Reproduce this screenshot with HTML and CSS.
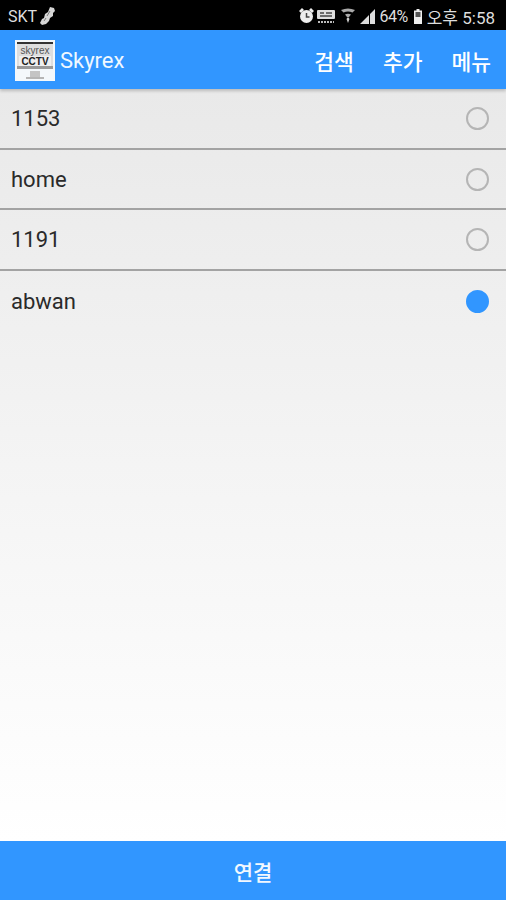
FILE: index.html
```html
<!DOCTYPE html>
<html>
<head>
    <title>Skyrex</title>
    <meta charset="utf-8">
    <link rel="stylesheet" href="styles.css">
</head>
<body>
    <div id="wrap">
        <div class="status">
            <div class="status-left">
                <span>SKT</span>
                <svg width="16" height="20" viewBox="0 0 16 20">
                    <path d="M10 1l4 1 1 3-2 2 0 3-3 2-1 3-3 3-4 1-2-2 2-4 2-1 1-4 3-2z" fill="#d6d6d6"/>
                    <path d="M10 5l-3 5M6 12l-2 3" stroke="#777"/>
                </svg>
            </div>
            <div class="status-right">
                <svg width="15" height="16" viewBox="0 0 15 16">
                    <circle cx="7.500" cy="8.500" r="6.500" fill="#eee"/>
                    <path d="M0 3l3-3 2 2-3 3zM15 3l-3-3-2 2 3 3z" fill="#eee"/>
                    <path d="M7.500 5v4h3" stroke="#444" stroke-width="1.500" fill="none"/>
                </svg>
                <svg class="ic-card" width="18" height="15" viewBox="0 0 18 15">
                    <rect x="0" y="1" width="18" height="9" rx="1" fill="#ddd"/>
                    <path d="M3 4h4M9 4h6M3 7h12" stroke="#444" stroke-width="1.500"/>
                    <path d="M1 13h16" stroke="#bbb" stroke-width="2" stroke-dasharray="2 1"/>
                </svg>
                <svg width="14" height="17" viewBox="0 0 14 17">
                    <path d="M0 2q7-3 14 0l-2.500 2.500q-4.500-2-9 0zM4 6.500q3-1.500 6 0l-2 2.500h-2z" fill="#aaa"/>
                    <path d="M7 9l1.500 2-1.500 4-1.500-4z" fill="#ccc"/>
                </svg>
                <svg width="15" height="15" viewBox="0 0 15 15">
                    <path d="M0 15l9-9v9zM10 5l5-5v15h-5z" fill="#ddd"/>
                </svg>
                <span class="pct">64%</span>
                <svg class="ic-batt" width="8" height="15" viewBox="0 0 8 15">
                    <path d="M2.500 0h3v1.500H8V15H0V1.500h2.500z" fill="#eee"/>
                    <rect x="1.500" y="3" width="5" height="5" fill="#555"/>
                </svg>
                <span class="clock">오후 5:58</span>
            </div>
        </div>

        <div class="appbar">
            <svg class="logo" width="40" height="41" viewBox="0 0 40 41">
                <rect width="40" height="41" fill="#f4f8fb"/>
                <rect x="2" y="2" width="36" height="2" fill="#333"/>
                <rect x="2" y="4" width="36" height="23" fill="#dedede"/>
                <rect x="4" y="16" width="32" height="10" fill="#efefef"/>
                <rect x="2" y="26" width="36" height="3" fill="#9a9a9a"/>
                <rect x="15" y="31" width="10" height="6" fill="#c4c4c4"/>
                <rect x="11" y="37" width="18" height="2" fill="#b5b5b5"/>
                <text x="20" y="14" class="logo-top">skyrex</text>
                <text x="20" y="25" class="logo-bot">CCTV</text>
            </svg>
            <div class="title">Skyrex</div>
            <div class="actions">
                <span>검색</span>
                <span>추가</span>
                <span>메뉴</span>
            </div>
        </div>

        <div class="main">
            <div class="row line">
                <span>1153</span>
                <div class="radio"></div>
            </div>
            <div class="row line">
                <span>home</span>
                <div class="radio"></div>
            </div>
            <div class="row line">
                <span>1191</span>
                <div class="radio"></div>
            </div>
            <div class="row">
                <span>abwan</span>
                <div class="radio on"></div>
            </div>
        </div>

        <div class="connect">연결</div>
    </div>
</body>
</html>
```

FILE: styles.css
```css
html,body{
    margin:0;
    height:100%;
}
body{
    font-family: "Roboto", "Noto Sans CJK KR", sans-serif;
    background: #000;
}
#wrap{
    width: 506px;
    height: 900px;
    display: flex;
    flex-direction: column;
    overflow: hidden;
}
.status{
    height: 30px;
    flex: none;
    background: #000;
    color: #dedede;
    font-size: 16px;
    display: flex;
    justify-content: space-between;
    align-items: center;
    padding: 2px 11px 0 8px;
    box-sizing: border-box;
}
.status-left,.status-right{
    display: flex;
    align-items: center;
}
.status-left{
    gap: 3px;
}
.status-right{
    gap: 5px;
}
.ic-card{
    margin-left: -2px;
    margin-right: 1px;
}
.pct{
    letter-spacing: -.5px;
}
.ic-batt{
    margin-left: 1px;
}
.clock{
    font-size: 17px;
}
.appbar{
    height: 59px;
    flex: none;
    background: #3196ff;
    display: flex;
    align-items: center;
    padding: 1px 15px 0 15px;
    box-sizing: border-box;
    color: #fff;
    position: relative;
    box-shadow: 0 2px 3px rgba(0,0,0,.2);
}
.logo{
    flex: none;
}
.logo-top{
    font: 10px "Liberation Sans", sans-serif;
    fill: #555;
    text-anchor: middle;
}
.logo-bot{
    font: bold 10px "Liberation Sans", sans-serif;
    fill: #222;
    text-anchor: middle;
}
.title{
    font-size: 22px;
    margin-left: 5px;
    color: #f0f8ff;
}
.actions{
    margin-left: auto;
    display: flex;
    gap: 29px;
    font-size: 21.500px;
    font-weight: 500;
}
.main{
    flex: 1;
    background: linear-gradient(#e9e9e9, #f4f4f4 50%, #fff);
}
.row{
    height: 60.500px;
    display: flex;
    align-items: center;
    justify-content: space-between;
    padding: 1px 17px 0 11px;
    box-sizing: border-box;
    font-size: 22px;
    color: #2a2a2a;
}
.line{
    border-bottom: 2px solid #a3a3a3;
}
.radio{
    width: 23px;
    height: 23px;
    border: 2px solid #b5b5b5;
    border-radius: 50%;
    box-sizing: border-box;
}
.radio.on{
    background: #3196ff;
    border-color: #3196ff;
}
.connect{
    height: 59px;
    flex: none;
    background: #3196ff;
    color: #f2f8ff;
    font-size: 21px;
    font-weight: 500;
    display: flex;
    align-items: center;
    justify-content: center;
}
```
